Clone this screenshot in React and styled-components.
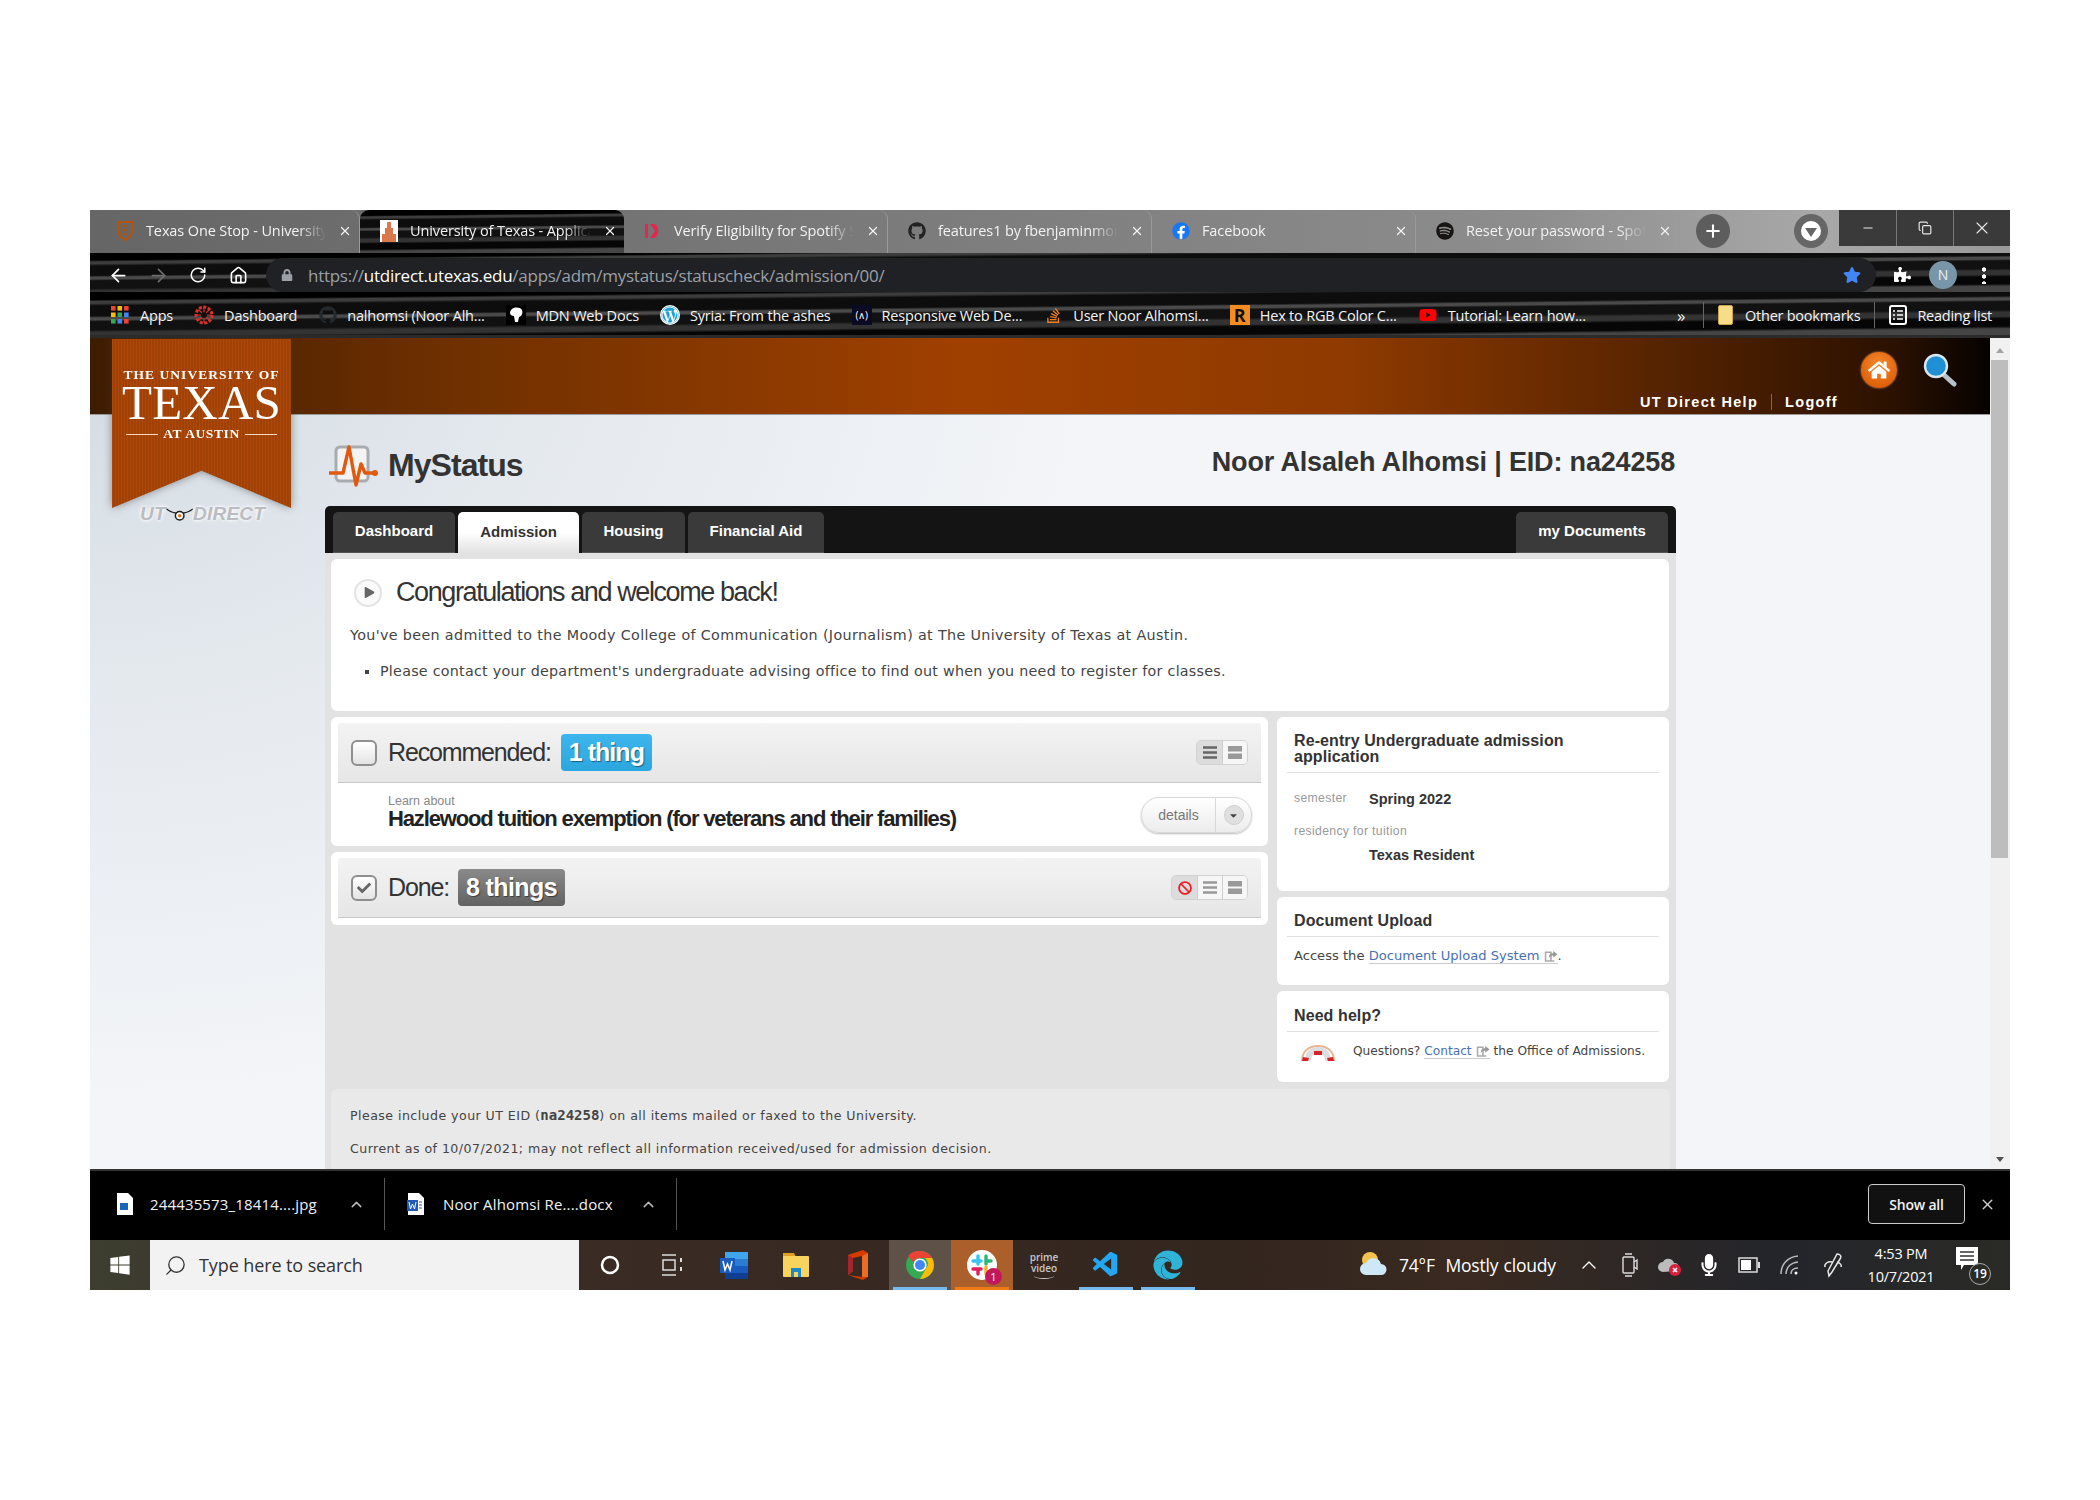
import styled, { createGlobalStyle, css } from "styled-components";
import { ArrowLeft, ArrowRight, RotateCw, Home, Plus, X, Minus, ChevronUp, Search, Copy } from "lucide-react";
import {
  FaGithub,
  FaFacebook,
  FaSpotify,
  FaWordpress,
  FaStackOverflow,
  FaYoutube,
  FaWindows,
  FaMicrophone,
  FaPuzzlePiece,
  FaStar,
  FaLock,
  FaBan,
  FaCheck,
  FaPlay,
  FaEdge,
  FaHome,
  FaCaretDown,
} from "react-icons/fa";
import { VscVscode } from "react-icons/vsc";

const GlobalStyle = createGlobalStyle`
  html, body {
    margin: 0;
    padding: 0;
    background: #fff;
  }
  * {
    box-sizing: border-box;
  }
`;

const winFont = `"Open Sans", "Noto Sans", sans-serif`;
const arial = `"Liberation Sans", Arial, sans-serif`;
const verdana = `"DejaVu Sans", Verdana, sans-serif`;

/* the chrome theme is a stretched photo, streaks are close enough */
const streaks = css`
  background:
    linear-gradient(179.4deg, #000 0 12%, #3d3d3d 15% 18%, #0d0d0d 22% 38%, #4a4a4a 41% 44%, #111 47% 60%, #333 64% 70%, #060606 74% 86%, #454545 90% 100%);
`;

const Screen = styled.div`
  width: 2100px;
  height: 1500px;
  padding: 210px 0 0 90px;
  overflow: hidden;
`;

const Window = styled.div`
  width: 1920px;
  height: 1080px;
  display: flex;
  flex-direction: column;
  font-family: ${winFont};
`;

/* ---------- tab strip ---------- */

const TabStrip = styled.div`
  height: 43px;
  display: flex;
  padding-left: 6px;
  background: linear-gradient(90deg, #666 0%, #7a7a7a 40%, #8d8d8d 75%, #a8a8a8 90%, #999 100%);
  position: relative;
`;

const Tab = styled.div`
  width: 264px;
  flex: none;
  display: flex;
  align-items: center;
  gap: 12px;
  padding: 0 7px 2px 20px;
  color: #f2f2f2;
  font-size: 14.5px;
  letter-spacing: -0.12px;
  border-radius: 9px 9px 0 0;
  ${(p) => p.$active && streaks}
  border-right: ${(p) => (p.$active ? "none" : "1px solid #9a9a9a")};
`;

const TabIcon = styled.span`
  width: 18px;
  height: 20px;
  flex: none;
  display: flex;
  align-items: center;
  justify-content: center;
  font-size: 18px;
  color: ${(p) => p.$color || "#222"};
  background: ${(p) => p.$bg || "transparent"};
`;

const TabTitle = styled.span`
  flex: 1;
  white-space: nowrap;
  overflow: hidden;
  mask-image: linear-gradient(90deg, #000 85%, transparent 100%);
`;

const NewTab = styled.div`
  width: 34px;
  height: 34px;
  margin: 4px 0 0 16px;
  border-radius: 50%;
  background: #5d5d5d;
  color: #fff;
  display: flex;
  align-items: center;
  justify-content: center;
`;

const ProfileDot = styled.div`
  width: 34px;
  height: 34px;
  margin: 4px 0 0 64px;
  border-radius: 50%;
  background: #666;
  display: flex;
  align-items: center;
  justify-content: center;
`;

const ProfileInner = styled.span`
  width: 20px;
  height: 20px;
  border-radius: 50%;
  background: #fff;
  display: flex;
  align-items: center;
  justify-content: center;
  padding-top: 2px;
  &::after {
    content: "";
    border-left: 6px solid transparent;
    border-right: 6px solid transparent;
    border-top: 9px solid #666;
  }
`;

const WindowButtons = styled.div`
  margin-left: auto;
  height: 36px;
  display: flex;
  background: #3a3a3a;
`;

const WindowButton = styled.div`
  width: 57px;
  display: flex;
  align-items: center;
  justify-content: center;
  color: #e8e8e8;
  border-left: 1px solid #777;
  &:first-child {
    border-left: none;
  }
`;

/* ---------- toolbar ---------- */

const Toolbar = styled.div`
  height: 39px;
  display: flex;
  align-items: flex-start;
  padding-left: 8px;
  ${streaks}
`;

const NavButton = styled.div`
  width: 40px;
  height: 34px;
  margin-top: 5px;
  display: flex;
  align-items: center;
  justify-content: center;
  color: ${(p) => (p.$dim ? "#6c6c6c" : "#fff")};
`;

const AddressBar = styled.div`
  width: 1610px;
  height: 34px;
  margin: 5px 0 0 8px;
  border-radius: 17px;
  background: #202124;
  display: flex;
  align-items: center;
  padding: 0 15px;
  font-size: 17px;
  letter-spacing: -0.27px;
  color: #9aa0a6;
`;

const LockIcon = styled.span`
  display: flex;
  font-size: 12px;
  margin-right: 15px;
`;

const Host = styled.span`
  color: #fff;
`;

const StarIcon = styled.span`
  margin-left: auto;
  display: flex;
  font-size: 18px;
  color: #4285f4;
`;

const ToolIcons = styled.div`
  display: flex;
  align-items: center;
  height: 43px;
  padding-left: 18px;
  gap: 18px;
  color: #fff;
`;

const Avatar = styled.div`
  width: 28px;
  height: 28px;
  border-radius: 50%;
  background: #7996a8;
  color: #e8eef2;
  font-size: 14px;
  display: flex;
  align-items: center;
  justify-content: center;
`;

const MenuDots = styled.div`
  width: 4px;
  height: 18px;
  margin-left: 7px;
  background: radial-gradient(circle, #fff 2px, transparent 2.2px) 0 0 / 4px 7px repeat-y;
`;

/* ---------- bookmarks ---------- */

const BookmarkBar = styled.div`
  height: 43px;
  display: flex;
  align-items: center;
  padding: 3px 0 0 20px;
  gap: 21px;
  color: #f4f4f4;
  font-size: 14.5px;
  letter-spacing: -0.19px;
  white-space: nowrap;
  ${streaks}
`;

const Bookmark = styled.div`
  display: flex;
  align-items: center;
  gap: ${(p) => p.$gap || 10}px;
`;

const MarkIcon = styled.span`
  width: 20px;
  height: 20px;
  flex: none;
  display: flex;
  align-items: center;
  justify-content: center;
  font-size: ${(p) => p.$size || 18}px;
  color: ${(p) => p.$color || "#fff"};
  background: ${(p) => p.$bg || "transparent"};
  border-radius: ${(p) => (p.$round ? "50%" : "0")};
`;

const RightMarks = styled.div`
  margin-left: auto;
  display: flex;
  align-items: center;
  padding-right: 18px;
  gap: 14px;
  letter-spacing: -0.25px;
`;

const Chevrons = styled.span`
  font-size: 17px;
  margin-right: 4px;
`;

const BarSep = styled.span`
  width: 1px;
  height: 26px;
  background: #666;
`;

const Folder = styled.span`
  width: 15px;
  height: 20px;
  background: #f7dd87;
  border: 1px solid #c9a94b;
  border-radius: 2px;
`;

/* ---------- page ---------- */

const Page = styled.div`
  height: 834px;
  padding-top: 3px;
  background: #2b2b2b;
  display: flex;
`;

const PageBody = styled.div`
  flex: 1;
  position: relative;
  overflow: hidden;
  background:
    radial-gradient(ellipse 1000px 760px at 0 0, #d2dae2 0%, #e4e9ee 45%, #f3f5f8 100%),
    #f3f5f8;
`;

const TopBand = styled.div`
  height: 77px;
  background: linear-gradient(90deg, #3d1c02 0%, #6d2f00 18%, #a04000 46%, #8f3a00 66%, #552300 83%, #2b1100 95%, #050200 100%);
  border-bottom: 1px solid #9a9a9a;
  display: flex;
  flex-direction: column;
  align-items: flex-end;
  padding-right: 33px;
`;

const TopIcons = styled.div`
  height: 46px;
  padding-top: 17px;
  display: flex;
  align-items: center;
  gap: 26px;
`;

const HomeBadge = styled.div`
  width: 36px;
  height: 36px;
  border-radius: 50%;
  background: radial-gradient(circle at 50% 35%, #f58a2c, #e0620c 70%, #c95205);
  color: #fff;
  font-size: 22px;
  display: flex;
  align-items: center;
  justify-content: center;
  box-shadow: 0 0 2px #e9a36c;
`;

const TopLinks = styled.div`
  display: flex;
  align-items: center;
  color: #fff;
  font: bold 14.5px ${arial};
  letter-spacing: 1.3px;
  margin-right: 119px;
  height: 20px;
  margin-top: 8px;
`;

const TopLink = styled.span`
  padding: 0 13px;
  & + & {
    border-left: 1px solid #b5581a;
  }
  &:last-child {
    padding-right: 0;
  }
`;

const Banner = styled.div`
  position: absolute;
  top: 1px;
  left: 22px;
  width: 179px;
  height: 169px;
  filter: drop-shadow(0 0 4px rgba(60, 60, 60, 0.55));
`;

const BannerShape = styled.div`
  height: 100%;
  padding-top: 28px;
  clip-path: polygon(0 0, 100% 0, 100% 100%, 50% 78%, 0 100%);
  background: repeating-linear-gradient(90deg, #ad480a 0 1px, #a04205 1px 3px);
  color: #fff;
  font-family: "Liberation Serif", serif;
  text-align: center;
`;

const BannerSmall = styled.div`
  font-size: 13.5px;
  font-weight: bold;
  letter-spacing: 1.05px;
  line-height: 16px;
  white-space: nowrap;
`;

const BannerBig = styled.div`
  font-size: 49px;
  line-height: 40px;
  letter-spacing: 0.2px;
`;

const BannerFoot = styled.div`
  margin-top: 3px;
  padding: 0 14px;
  display: flex;
  align-items: center;
  gap: 5px;
  font-size: 13.5px;
  line-height: 16px;
  font-weight: bold;
  letter-spacing: 0.6px;
  white-space: nowrap;
  &::before,
  &::after {
    content: "";
    flex: 1;
    height: 1px;
    background: #f5d9c0;
  }
`;

const UtDirect = styled.div`
  position: absolute;
  top: 161px;
  left: 50px;
  width: 125px;
  height: 30px;
  display: flex;
  align-items: center;
  justify-content: center;
  font: italic bold 19px ${arial};
  letter-spacing: 0.2px;
  color: #b9bcc0;
  text-shadow: 0 0 5px #fff, 0 0 3px #fff;
`;

const Content = styled.div`
  width: 1351px;
  margin-left: 235px;
`;

const TitleRow = styled.div`
  height: 91px;
  display: flex;
  align-items: center;
  justify-content: space-between;
  padding-top: 3px;
`;

const AppTitle = styled.div`
  display: flex;
  align-items: center;
  gap: 9px;
  font: bold 32px ${arial};
  letter-spacing: -0.95px;
  color: #333;
  margin-left: 2px;
  margin-top: 6px;
`;

const Who = styled.div`
  font: bold 27px ${arial};
  letter-spacing: -0.17px;
  color: #333;
  margin-top: 1px;
  margin-right: 1px;
`;

const TabBar = styled.div`
  height: 47px;
  padding: 6px 8px 0;
  background: #141414;
  border-radius: 5px 5px 0 0;
  display: flex;
  gap: 3px;
`;

const PageTab = styled.div`
  width: ${(p) => p.$w}px;
  display: flex;
  align-items: center;
  justify-content: center;
  border-radius: 5px 5px 0 0;
  font: bold 15px ${arial};
  padding-bottom: 3px;
  margin-left: ${(p) => (p.$right ? "auto" : "0")};
  color: ${(p) => (p.$active ? "#333" : "#fff")};
  background: ${(p) => (p.$active ? "linear-gradient(#fff 50%, #e2e2e2)" : "#3a3a3a")};
  border-bottom: ${(p) => (p.$active ? "none" : "1px solid #555")};
`;

const Panel = styled.div`
  background: #e2e2e2;
  padding: 6px 7px 0 6px;
  height: 618px;
`;

const Card = styled.div`
  background: #fff;
  border-radius: 6px;
`;

const WelcomeCard = styled(Card)`
  height: 152px;
  padding: 18px 20px 0 19px;
  color: #444;
  font: 14.3px ${verdana};
`;

const WelcomeHead = styled.div`
  display: flex;
  align-items: center;
  gap: 14px;
  margin-left: 4px;
  font: 27px ${arial};
  letter-spacing: -1.4px;
  color: #333;
`;

const PlayDot = styled.span`
  width: 28px;
  height: 28px;
  border-radius: 50%;
  border: 2px solid #e3e3e3;
  background: #fafafa;
  color: #666;
  font-size: 11px;
  display: flex;
  align-items: center;
  justify-content: center;
  padding-left: 2px;
`;

const WelcomeText = styled.p`
  margin: 19px 0 0;
  line-height: 17px;
  letter-spacing: 0.35px;
  white-space: nowrap;
`;

const WelcomeList = styled.ul`
  margin: 19px 0 0;
  padding: 0 0 0 30px;
  line-height: 17px;
  letter-spacing: 0.25px;
  list-style: square;
  white-space: nowrap;
`;

const Columns = styled.div`
  display: grid;
  grid-template-columns: 937px 392px;
  gap: 6px 9px;
  margin-top: 6px;
`;

const Stack = styled.div`
  display: flex;
  flex-direction: column;
  gap: 6px;
`;

const ThingsCard = styled(Card)`
  padding: 6px 7px 7px;
`;

const ThingsHead = styled.div`
  height: 60px;
  padding: 0 13px;
  display: flex;
  align-items: center;
  background: linear-gradient(#f3f3f3, #e6e6e6);
  border-bottom: 1px solid #c9c9c9;
  border-radius: 3px 3px 0 0;
  font: 25px ${arial};
  letter-spacing: -1.15px;
  color: #333;
`;

const CheckBox = styled.span`
  width: 26px;
  height: 26px;
  margin-right: 11px;
  border: 2px solid #8f8f8f;
  border-radius: 6px;
  background: linear-gradient(#fff, #e4e4e4);
  color: #666;
  font-size: 14px;
  display: flex;
  align-items: center;
  justify-content: center;
`;

const CountBadge = styled.span`
  margin-left: ${(p) => p.$gap}px;
  height: 37px;
  padding: 0 8px;
  display: flex;
  align-items: center;
  border-radius: 4px;
  font-weight: bold;
  letter-spacing: ${(p) => (p.$gray ? "-0.6px" : "-0.95px")};
  color: #fff;
  text-shadow: 1px 1px 1px rgba(0, 0, 0, 0.45);
  background: ${(p) => (p.$gray ? "linear-gradient(#8a8a8a, #626262)" : "linear-gradient(#3cb6ec, #2ca6de)")};
`;

const Toggles = styled.div`
  margin-left: auto;
  height: 25px;
  display: flex;
  border: 1px solid #d2d2d2;
  border-radius: 5px;
  overflow: hidden;
`;

const ToggleCell = styled.span`
  width: 25px;
  display: flex;
  align-items: center;
  justify-content: center;
  background: ${(p) => (p.$on ? "#dcdcdc" : "#f6f6f6")};
  border-left: 1px solid #cfcfcf;
  color: #ee1c25;
  font-size: 14px;
  &:first-child {
    border-left: none;
  }
`;

const ThingRow = styled.div`
  height: 56px;
  padding: 11px 9px 0 50px;
  display: flex;
  justify-content: space-between;
`;

const ThingSmall = styled.div`
  font: 12.5px/14px ${arial};
  color: #888;
`;

const ThingName = styled.div`
  font: bold 22px/22px ${arial};
  letter-spacing: -1.15px;
  color: #222;
`;

const DetailsPill = styled.div`
  width: 111px;
  height: 36px;
  margin-top: 3px;
  display: flex;
  border: 1px solid #d8d8d8;
  border-radius: 18px;
  background: linear-gradient(#fff, #ececec);
  box-shadow: 0 1px 2px #bbb;
  font: 14px ${arial};
  color: #777;
`;

const DetailsLabel = styled.span`
  width: 74px;
  border-right: 1px solid #d8d8d8;
  display: flex;
  align-items: center;
  justify-content: center;
`;

const DetailsArrow = styled.span`
  flex: 1;
  display: flex;
  align-items: center;
  justify-content: center;
`;

const ArrowDot = styled.span`
  width: 20px;
  height: 20px;
  border-radius: 50%;
  background: #e0e0e0;
  border: 1px solid #cfcfcf;
  color: #444;
  font-size: 11px;
  display: flex;
  align-items: center;
  justify-content: center;
`;

const SideCard = styled(Card)`
  height: ${(p) => p.$h}px;
  padding: ${(p) => p.$top}px 10px 0;
  color: #333;
`;

const SideHead = styled.div`
  padding: 0 6px 7px 7px;
  border-bottom: 1px solid #e0e0e0;
  font: bold 16px/16px ${arial};
  letter-spacing: 0.09px;
  color: #333;
`;

const FactLabel = styled.div`
  padding-left: 7px;
  margin-top: ${(p) => p.$top || 0}px;
  font: 12.2px ${arial};
  letter-spacing: 0.35px;
  color: #999;
`;

const FactRow = styled.div`
  display: flex;
  align-items: center;
  margin-top: 18px;
  ${FactLabel} {
    width: 82px;
    flex: none;
    margin-top: -3px;
  }
`;

const FactValue = styled.div`
  font: bold 14.5px ${arial};
  color: #333;
  margin-left: ${(p) => p.$indent || 0}px;
  margin-top: ${(p) => p.$top || 0}px;
`;

const SideText = styled.div`
  font: ${(p) => p.$size || 13.1}px ${verdana};
  color: #444;
  white-space: nowrap;
  padding-left: 7px;
  margin-top: 11px;
`;

const HelpRow = styled.div`
  display: flex;
  align-items: flex-start;
  gap: 17px;
  padding-left: 13px;
  margin-top: 12px;
  ${SideText} {
    margin-top: 0;
    padding-left: 0;
  }
`;

const OutLink = styled.span`
  color: #4a6fb5;
  border-bottom: 1px solid #ccc;
  display: inline-flex;
  align-items: center;
  gap: 4px;
`;

const FootNote = styled.div`
  margin: 7px -1px 0 0;
  height: 82px;
  padding: 18px 19px 0;
  background: #e9e9e9;
  border-radius: 6px 6px 0 0;
  font: 12.6px/17px ${verdana};
  letter-spacing: 0.44px;
  color: #444;
  p {
    margin: 0 0 16px;
  }
  b {
    font: bold 14px/17px "DejaVu Sans Mono", monospace;
    letter-spacing: 0;
  }
`;

const ScrollTrack = styled.div`
  width: 20px;
  flex: none;
  background: #f1f1f1;
  display: flex;
  flex-direction: column;
  align-items: center;
  justify-content: space-between;
  padding: 10px 0 7px;
  position: relative;
`;

const ScrollThumb = styled.div`
  position: absolute;
  top: 22px;
  left: 1px;
  width: 17px;
  height: 498px;
  background: #bdbdbd;
`;

const ScrollArrow = styled.span`
  width: 0;
  height: 0;
  border-left: 4px solid transparent;
  border-right: 4px solid transparent;
  ${(p) =>
    p.$down
      ? "border-top: 5px solid #505050;"
      : "border-bottom: 5px solid #a3a3a3;"}
`;

/* ---------- downloads ---------- */

const DownloadBar = styled.div`
  height: 71px;
  padding-bottom: 3px;
  background: #000;
  border-top: 2px solid #333;
  display: flex;
  align-items: center;
  color: #f2f2f2;
  font-size: 15px;
  letter-spacing: 0.15px;
`;

const DownloadItem = styled.div`
  width: ${(p) => p.$w}px;
  height: 52px;
  display: flex;
  align-items: center;
  padding-left: ${(p) => p.$pad}px;
  border-right: 1px solid #555;
`;

const FileName = styled.span`
  width: ${(p) => p.$w}px;
  margin-left: ${(p) => p.$gap}px;
  white-space: nowrap;
`;

const ShowAll = styled.div`
  margin-left: auto;
  width: 97px;
  height: 40px;
  border: 1px solid #ccc;
  border-radius: 4px;
  background: #111;
  font-weight: 600;
  font-size: 14px;
  letter-spacing: -0.2px;
  display: flex;
  align-items: center;
  justify-content: center;
`;

const CloseBar = styled.div`
  width: 45px;
  display: flex;
  justify-content: center;
  color: #ccc;
`;

/* ---------- taskbar ---------- */

const Taskbar = styled.div`
  height: 50px;
  display: flex;
  color: #fff;
  background: linear-gradient(90deg, #3d3d30 0%, #3a2c24 25%, #33261f 60%, #3a2a20 72%, #23252b 88%, #2a2a26 100%);
`;

const StartCell = styled.div`
  width: 60px;
  display: flex;
  align-items: center;
  justify-content: center;
  font-size: 22px;
`;

const SearchBox = styled.div`
  width: 429px;
  display: flex;
  align-items: center;
  gap: 12px;
  padding-left: 14px;
  background: #f2f2f2;
  color: #333;
  font-size: 18px;
  letter-spacing: -0.1px;
`;

const TaskCell = styled.div`
  width: 62px;
  display: flex;
  align-items: center;
  justify-content: center;
  font-size: 30px;
  background: ${(p) => p.$bg || "transparent"};
  position: relative;
  ${(p) =>
    p.$line &&
    css`
      &::after {
        content: "";
        position: absolute;
        left: 4px;
        right: 4px;
        bottom: 0;
        height: 3px;
        background: ${p.$line};
      }
    `}
`;

const PrimeText = styled.span`
  font-size: 10px;
  font-weight: 600;
  line-height: 11px;
  text-align: center;
  color: #c9c9c9;
  &::after {
    content: "";
    display: block;
    width: 20px;
    height: 5px;
    margin: -1px auto 0;
    border-bottom: 1.5px solid #c9c9c9;
    border-radius: 50%;
  }
`;

const SlackCount = styled.span`
  position: absolute;
  right: 11px;
  bottom: 5px;
  width: 17px;
  height: 17px;
  border-radius: 50%;
  background: #c2185b;
  font-size: 11px;
  line-height: 17px;
  text-align: center;
`;

const Tray = styled.div`
  margin-left: auto;
  display: grid;
  grid-template-columns: 40px 175px 40px 42px 38px 40px 40px 42px 46px 88px 52px 13px;
  align-items: center;
  justify-items: center;
`;

const Weather = styled.span`
  justify-self: start;
  padding-left: 5px;
  font-size: 17.5px;
  word-spacing: 1px;
  white-space: pre;
  letter-spacing: -0.2px;
`;

const Clock = styled.div`
  text-align: center;
  font-size: 14.5px;
  line-height: 23px;
  letter-spacing: -0.2px;
`;

const Notes = styled.div`
  position: relative;
  width: 30px;
  height: 36px;
`;

const NotesCount = styled.span`
  position: absolute;
  right: -5px;
  bottom: -2px;
  width: 22px;
  height: 22px;
  border-radius: 50%;
  border: 1px solid #aaa;
  background: #2a2a26;
  font-size: 12px;
  font-weight: 600;
  line-height: 20px;
  text-align: center;
`;

/* ---------- drawings ---------- */

const AppsGrid = () => (
  <svg width="18" height="18" viewBox="0 0 18 18">
    {[
      ["#ea4335", "#fbbc05", "#ea4335"],
      ["#fbbc05", "#34a853", "#4285f4"],
      ["#34a853", "#4285f4", "#ea4335"],
    ].map((row, y) =>
      row.map((c, x) => <rect key={`${x}${y}`} x={x * 6.5} y={y * 6.5} width="4.6" height="4.6" fill={c} />)
    )}
  </svg>
);

const UtSeal = () => (
  <svg width="16" height="20" viewBox="0 0 16 20">
    <path d="M1 1h14v10c0 4-4 6-7 8-3-2-7-4-7-8z" fill="none" stroke="#b45309" strokeWidth="2" />
    <path d="M5 5h6M5 9h6M5 13h6" stroke="#b45309" strokeWidth="1.6" />
  </svg>
);

const TowerFav = () => (
  <svg width="18" height="22" viewBox="0 0 18 22">
    <rect width="18" height="22" fill="#fff" />
    <path d="M7 2h4v6h2v6h3v8H2v-8h3V8h2z" fill="#d9784a" />
  </svg>
);

const IdFav = () => (
  <svg width="16" height="16" viewBox="0 0 16 16">
    <rect x="0" y="1" width="3" height="14" fill="#e5264d" />
    <path d="M5 1h3c7 0 7 14 0 14H5l5-7z" fill="#e5264d" />
  </svg>
);

const SpokeWheel = () => (
  <svg width="20" height="20" viewBox="0 0 20 20">
    <circle cx="10" cy="10" r="8" fill="none" stroke="#d7322b" strokeWidth="3" strokeDasharray="3 1.6" />
    <path d="M10 2v16M2 10h16M4.500 4.500l11 11M15.500 4.500l-11 11" stroke="#d7322b" strokeWidth="1.2" />
    <circle cx="10" cy="10" r="3" fill="#111" />
  </svg>
);

const MdnMark = () => (
  <svg width="14" height="16" viewBox="0 0 14 16">
    <path d="M3 2c3-2 8-2 10 1 1 3 0 6-3 7l-1 5H6L5 9C3 9 1 8 1 6c0-2 1-3 2-4z" fill="#fff" />
  </svg>
);

const FlameStack = () => <FaStackOverflow color="#f48024" size={17} />;

const ReadingList = () => (
  <svg width="18" height="20" viewBox="0 0 18 20">
    <rect x="1" y="1" width="16" height="18" rx="2" fill="none" stroke="#fff" strokeWidth="2" />
    <path d="M4 6h2M8 6h6M4 10h2M8 10h6M4 14h2M8 14h6" stroke="#fff" strokeWidth="1.6" />
  </svg>
);

const PulseLogo = () => (
  <svg width="52" height="46" viewBox="0 0 52 46">
    <rect x="9" y="5" width="32" height="34" rx="4" fill="#f4f4f4" stroke="#a8acb0" strokeWidth="3" />
    <path
      d="M2 31h14l6-26 7 38 5-21 4 9h9"
      fill="none"
      stroke="#e0590f"
      strokeWidth="3.4"
      strokeLinejoin="round"
    />
    <circle cx="48" cy="31" r="3" fill="#e0590f" />
  </svg>
);

const Longhorn = () => (
  <svg width="48" height="24" viewBox="0 0 48 24">
    <path d="M1 3c6 6 14 7 19 8M47 3c-6 6-14 7-19 8" fill="none" stroke="#1d1d1d" strokeWidth="2.4" />
    <circle cx="24" cy="15" r="7.500" fill="#fff" stroke="#1d1d1d" strokeWidth="2.6" />
    <circle cx="24" cy="15" r="3" fill="#d9781f" />
  </svg>
);

const Magnifier = () => (
  <svg width="34" height="34" viewBox="0 0 34 34">
    <path d="M20 21l11 10" stroke="#b7c0c6" strokeWidth="5" strokeLinecap="round" />
    <circle cx="13" cy="13" r="11" fill="#1f8fd6" stroke="#d9e7ef" strokeWidth="2.4" />
  </svg>
);

const ListGlyph = ({ dim }) => (
  <svg width="16" height="15" viewBox="0 0 16 15">
    <path d="M1 2.500h14M1 7.500h14M1 12.500h14" stroke={dim ? "#999" : "#666"} strokeWidth="2.4" />
  </svg>
);

const BlockGlyph = () => (
  <svg width="16" height="15" viewBox="0 0 16 15">
    <rect x="1" y="1" width="14" height="5.500" fill="#999" />
    <rect x="1" y="8.500" width="14" height="5.500" fill="#999" />
  </svg>
);

const LinkOutIcon = () => (
  <svg width="14" height="12" viewBox="0 0 12 11">
    <path d="M1 2h5v8H1zM9 10H1" fill="none" stroke="#aaa" strokeWidth="1.4" />
    <path d="M4 7c0-3 2-4 4-4V1l4 3-4 3V5C6 5 5 6 4 7z" fill="#999" />
  </svg>
);

const LifeBuoy = () => (
  <svg width="36" height="17" viewBox="0 0 36 17">
    <path d="M2 17C2 7 9 2 18 2s16 5 16 15" fill="none" stroke="#e8b596" strokeWidth="2" />
    <path d="M8 17C8 10 12 6 18 6s10 4 10 11" fill="none" stroke="#ddd" strokeWidth="6" />
    <path d="M14 7h8v4h-8zM3 13l6 1-1 3H2zM33 13l-6 1 1 3h6z" fill="#d8222a" />
  </svg>
);

const DocIcon = ({ word }) => (
  <svg width="18" height="22" viewBox="0 0 18 22">
    <path d="M1 0h11l5 5v17H1z" fill="#fff" />
    {word ? (
      <>
        <rect x="0" y="7" width="11" height="11" fill="#1e5bb8" />
        <path d="M2 9l1.500 7 2-5 2 5L9 9" fill="none" stroke="#fff" strokeWidth="1" />
        <path d="M12 9h3M12 12h3M12 15h3" stroke="#1e5bb8" strokeWidth="1.2" />
      </>
    ) : (
      <rect x="4" y="10" width="8" height="7" fill="#1a66b8" />
    )}
  </svg>
);

const WordTile = () => (
  <svg width="30" height="30" viewBox="0 0 30 30">
    <rect x="6" y="2" width="23" height="7" fill="#41a5ee" />
    <rect x="6" y="9" width="23" height="7" fill="#2b7cd3" />
    <rect x="6" y="16" width="23" height="7" fill="#185abd" />
    <rect x="6" y="23" width="23" height="6" fill="#103f91" />
    <rect x="1" y="8" width="15" height="15" fill="#1a5cbe" />
    <path d="M4 11l2 9 2.500-6 2.500 6 2-9" fill="none" stroke="#fff" strokeWidth="1.5" />
  </svg>
);

const ExplorerTile = () => (
  <svg width="30" height="30" viewBox="0 0 30 30">
    <path d="M2 3h11l2 4H2z" fill="#e0a020" />
    <rect x="2" y="6" width="26" height="21" rx="1" fill="#f9d45c" />
    <rect x="10" y="18" width="10" height="9" fill="#1e88c8" />
    <rect x="13" y="22" width="4" height="5" fill="#f9d45c" />
  </svg>
);

const OfficeTile = () => (
  <svg width="26" height="32" viewBox="0 0 26 32">
    <path d="M3 6l15-5 5 3v24l-5 3L3 26l14 2V7L8 9v13l-5 4z" fill="#d83b01" />
    <path d="M17 7v21l6 0V4z" fill="#eb6c24" />
    <path d="M8 9v13l-5 4V6z" fill="#a4262c" />
  </svg>
);

const ChromeTile = () => (
  <svg width="30" height="30" viewBox="0 0 30 30">
    <circle cx="15" cy="15" r="14" fill="#34a853" />
    <path d="M15 1a14 14 0 0 1 12.100 7H15a7 7 0 0 0-6.500 4.400L3 6a14 14 0 0 1 12-5z" fill="#ea4335" />
    <path d="M27.100 8A14 14 0 0 1 15 29l6-10.500A7 7 0 0 0 20 8z" fill="#fbbc05" />
    <circle cx="15" cy="15" r="6.600" fill="#fff" />
    <circle cx="15" cy="15" r="5" fill="#4285f4" />
  </svg>
);

const SlackTile = () => (
  <svg width="30" height="30" viewBox="0 0 30 30">
    <circle cx="15" cy="15" r="15" fill="#fff" />
    <path d="M11 6v8M6 11h8" stroke="#36c5f0" strokeWidth="3.4" strokeLinecap="round" />
    <path d="M19 6v8M19 11h5" stroke="#2eb67d" strokeWidth="3.4" strokeLinecap="round" />
    <path d="M6 19h8M11 19v5" stroke="#e01e5a" strokeWidth="3.4" strokeLinecap="round" />
    <path d="M19 17v7" stroke="#ecb22e" strokeWidth="3.4" strokeLinecap="round" />
  </svg>
);

const CloudSun = () => (
  <svg width="28" height="28" viewBox="0 0 28 28">
    <circle cx="10" cy="9" r="8" fill="#f2c14e" />
    <path d="M6 24a6 6 0 0 1 0-12 8 8 0 0 1 15 1 5.500 5.500 0 0 1 0 11z" fill="#cfe8f8" />
  </svg>
);

const TrayCamera = () => (
  <svg width="16" height="24" viewBox="0 0 16 24" fill="none" stroke="#ddd" strokeWidth="1.4">
    <rect x="1" y="4" width="11" height="16" rx="1" />
    <path d="M12 9l3-2v9l-3-2M3 1h7M3 23h7" />
  </svg>
);

const TrayCloud = () => (
  <svg width="24" height="24" viewBox="0 0 24 24">
    <path d="M5 19a5 5 0 0 1 0-10 6 6 0 0 1 11 1 4 4 0 0 1 1 8z" fill="#bbb" />
    <circle cx="17" cy="17" r="6" fill="#d81f3c" />
    <path d="M15 15l4 4M19 15l-4 4" stroke="#fff" strokeWidth="1.5" />
  </svg>
);

const TrayBattery = () => (
  <svg width="22" height="16" viewBox="0 0 22 16">
    <rect x="1" y="1" width="18" height="14" fill="none" stroke="#ddd" strokeWidth="1.5" />
    <rect x="3" y="3" width="10" height="10" fill="#fff" />
    <rect x="20" y="5" width="2" height="6" fill="#ddd" />
  </svg>
);

const TrayWifi = () => (
  <svg width="20" height="22" viewBox="0 0 20 22" fill="none" stroke="#bbb" strokeWidth="1.5">
    <path d="M1 20C1 11 7 3 18 2M6 20c0-6 4-11 12-12M11 20c0-3 2-6 7-6" />
    <circle cx="16" cy="19" r="1.500" fill="#fff" stroke="none" />
  </svg>
);

const TrayPen = () => (
  <svg width="22" height="26" viewBox="0 0 22 26" fill="none" stroke="#e8e8e8" strokeWidth="1.5">
    <path d="M14 2c3 0 5 2 3 5l-8 13-3 4-1-5z" />
    <path d="M9 10c-4-1-8 2-7 5M14 10c3 1 5 3 4 5" />
  </svg>
);

const TaskView = () => (
  <svg width="22" height="24" viewBox="0 0 22 24" fill="none" stroke="#ddd" strokeWidth="1.5">
    <path d="M1 2h14M1 22h14" />
    <rect x="2" y="7" width="12" height="10" />
    <path d="M20 5v4M20 14v4" strokeWidth="2" />
  </svg>
);

const NotesPage = () => (
  <svg width="22" height="24" viewBox="0 0 22 24">
    <path d="M0 0h22v18H8l-3 5v-5H0z" fill="#fff" />
    <path d="M4 5h14M4 9h14M4 13h14" stroke="#333" strokeWidth="1.4" />
  </svg>
);

const whiteDot = "radial-gradient(circle, #fff 55%, transparent 60%)";

const tabs = [
  { icon: <UtSeal />, title: "Texas One Stop - University" },
  { icon: <TowerFav />, title: "University of Texas - Applica", active: true },
  { icon: <IdFav />, title: "Verify Eligibility for Spotify S" },
  { icon: <FaGithub />, title: "features1 by fbenjaminmor" },
  { icon: <FaFacebook />, color: "#1877f2", bg: whiteDot, title: "Facebook" },
  { icon: <FaSpotify />, color: "#191414", title: "Reset your password - Spot" },
];

const marks = [
  { icon: <AppsGrid />, label: "Apps" },
  { icon: <SpokeWheel />, label: "Dashboard" },
  { icon: <FaGithub />, color: "#24292e", label: "nalhomsi (Noor Alh...", gap: 9 },
  { icon: <MdnMark />, bg: "#000", label: "MDN Web Docs" },
  { icon: <FaWordpress />, color: "#21a0d8", bg: "#fff", round: true, label: "Syria: From the ashes" },
  { icon: "(∧)", bg: "#0a0a23", size: 10, label: "Responsive Web De..." },
  { icon: <FlameStack />, label: "User Noor Alhomsi..." },
  { icon: <b>R</b>, color: "#111", bg: "#f48c22", label: "Hex to RGB Color C..." },
  { icon: <FaYoutube />, color: "#f00", label: "Tutorial: Learn how..." },
];

const App = () => {
  return (
    <Screen>
      <GlobalStyle />
      <Window>
        <TabStrip>
          {tabs.map((t) => (
            <Tab key={t.title} $active={t.active}>
              <TabIcon $color={t.color} $bg={t.bg}>
                {t.icon}
              </TabIcon>
              <TabTitle>{t.title}</TabTitle>
              <X size={14} strokeWidth={2.2} />
            </Tab>
          ))}
          <NewTab>
            <Plus size={20} strokeWidth={2.5} />
          </NewTab>
          <ProfileDot>
            <ProfileInner />
          </ProfileDot>
          <WindowButtons>
            <WindowButton>
              <Minus size={14} />
            </WindowButton>
            <WindowButton>
              <Copy size={14} />
            </WindowButton>
            <WindowButton>
              <X size={20} strokeWidth={1.3} />
            </WindowButton>
          </WindowButtons>
        </TabStrip>

        <Toolbar>
          <NavButton>
            <ArrowLeft size={21} />
          </NavButton>
          <NavButton $dim>
            <ArrowRight size={21} />
          </NavButton>
          <NavButton>
            <RotateCw size={18} />
          </NavButton>
          <NavButton>
            <Home size={19} />
          </NavButton>
          <AddressBar>
            <LockIcon>
              <FaLock />
            </LockIcon>
            https://<Host>utdirect.utexas.edu</Host>/apps/adm/mystatus/statuscheck/admission/00/
            <StarIcon>
              <FaStar />
            </StarIcon>
          </AddressBar>
          <ToolIcons>
            <FaPuzzlePiece size={17} />
            <Avatar>N</Avatar>
            <MenuDots />
          </ToolIcons>
        </Toolbar>

        <BookmarkBar>
          {marks.map((m) => (
            <Bookmark key={m.label} $gap={m.gap}>
              <MarkIcon $color={m.color} $bg={m.bg} $size={m.size} $round={m.round}>
                {m.icon}
              </MarkIcon>
              {m.label}
            </Bookmark>
          ))}
          <RightMarks>
            <Chevrons>»</Chevrons>
            <BarSep />
            <Bookmark $gap={12}>
              <Folder />
              Other bookmarks
            </Bookmark>
            <BarSep />
            <Bookmark>
              <ReadingList />
              Reading list
            </Bookmark>
          </RightMarks>
        </BookmarkBar>

        <Page>
          <PageBody>
            <TopBand>
              <TopIcons>
                <HomeBadge>
                  <FaHome />
                </HomeBadge>
                <Magnifier />
              </TopIcons>
              <TopLinks>
                <TopLink>UT Direct Help</TopLink>
                <TopLink>Logoff</TopLink>
              </TopLinks>
            </TopBand>

            <Banner>
              <BannerShape>
                <BannerSmall>THE UNIVERSITY OF</BannerSmall>
                <BannerBig>TEXAS</BannerBig>
                <BannerFoot>AT AUSTIN</BannerFoot>
              </BannerShape>
            </Banner>
            <UtDirect>
              UT
              <Longhorn />
              DIRECT
            </UtDirect>

            <Content>
              <TitleRow>
                <AppTitle>
                  <PulseLogo />
                  MyStatus
                </AppTitle>
                <Who>Noor Alsaleh Alhomsi | EID: na24258</Who>
              </TitleRow>

              <TabBar>
                <PageTab $w={122}>Dashboard</PageTab>
                <PageTab $w={121} $active>
                  Admission
                </PageTab>
                <PageTab $w={103}>Housing</PageTab>
                <PageTab $w={136}>Financial Aid</PageTab>
                <PageTab $w={152} $right>
                  my Documents
                </PageTab>
              </TabBar>

              <Panel>
                <WelcomeCard>
                  <WelcomeHead>
                    <PlayDot>
                      <FaPlay />
                    </PlayDot>
                    Congratulations and welcome back!
                  </WelcomeHead>
                  <WelcomeText>
                    You've been admitted to the Moody College of Communication (Journalism) at The University of Texas at Austin.
                  </WelcomeText>
                  <WelcomeList>
                    <li>Please contact your department's undergraduate advising office to find out when you need to register for classes.</li>
                  </WelcomeList>
                </WelcomeCard>

                <Columns>
                  <Stack>
                    <ThingsCard>
                      <ThingsHead>
                        <CheckBox />
                        Recommended:
                        <CountBadge $gap={10}>1 thing</CountBadge>
                        <Toggles>
                          <ToggleCell $on>
                            <ListGlyph />
                          </ToggleCell>
                          <ToggleCell>
                            <BlockGlyph />
                          </ToggleCell>
                        </Toggles>
                      </ThingsHead>
                      <ThingRow>
                        <div>
                          <ThingSmall>Learn about</ThingSmall>
                          <ThingName>Hazlewood tuition exemption (for veterans and their families)</ThingName>
                        </div>
                        <DetailsPill>
                          <DetailsLabel>details</DetailsLabel>
                          <DetailsArrow>
                            <ArrowDot>
                              <FaCaretDown />
                            </ArrowDot>
                          </DetailsArrow>
                        </DetailsPill>
                      </ThingRow>
                    </ThingsCard>

                    <ThingsCard>
                      <ThingsHead>
                        <CheckBox>
                          <FaCheck />
                        </CheckBox>
                        Done:
                        <CountBadge $gap={9} $gray>
                          8 things
                        </CountBadge>
                        <Toggles>
                          <ToggleCell $on>
                            <FaBan />
                          </ToggleCell>
                          <ToggleCell>
                            <ListGlyph dim />
                          </ToggleCell>
                          <ToggleCell>
                            <BlockGlyph />
                          </ToggleCell>
                        </Toggles>
                      </ThingsHead>
                    </ThingsCard>
                  </Stack>

                  <Stack>
                    <SideCard $h={174} $top={16}>
                      <SideHead>Re-entry Undergraduate admission application</SideHead>
                      <FactRow>
                        <FactLabel>semester</FactLabel>
                        <FactValue>Spring 2022</FactValue>
                      </FactRow>
                      <FactLabel $top={17}>residency for tuition</FactLabel>
                      <FactValue $indent={82} $top={9}>
                        Texas Resident
                      </FactValue>
                    </SideCard>
                    <SideCard $h={88} $top={16}>
                      <SideHead>Document Upload</SideHead>
                      <SideText>
                        Access the{" "}
                        <OutLink>
                          Document Upload System <LinkOutIcon />
                        </OutLink>
                        .
                      </SideText>
                    </SideCard>
                    <SideCard $h={91} $top={17}>
                      <SideHead>Need help?</SideHead>
                      <HelpRow>
                        <LifeBuoy />
                        <SideText $size={12.2}>
                          Questions?{" "}
                          <OutLink>
                            Contact <LinkOutIcon />
                          </OutLink>{" "}
                          the Office of Admissions.
                        </SideText>
                      </HelpRow>
                    </SideCard>
                  </Stack>
                </Columns>

                <FootNote>
                  <p>
                    Please include your UT EID (<b>na24258</b>) on all items mailed or faxed to the University.
                  </p>
                  <p>Current as of 10/07/2021; may not reflect all information received/used for admission decision.</p>
                </FootNote>
              </Panel>
            </Content>
          </PageBody>
          <ScrollTrack>
            <ScrollArrow />
            <ScrollThumb />
            <ScrollArrow $down />
          </ScrollTrack>
        </Page>

        <DownloadBar>
          <DownloadItem $w={295} $pad={26}>
            <DocIcon />
            <FileName $w={198} $gap={16}>
              244435573_18414....jpg
            </FileName>
            <ChevronUp size={17} color="#bbb" />
          </DownloadItem>
          <DownloadItem $w={292} $pad={22}>
            <DocIcon word />
            <FileName $w={197} $gap={18}>
              Noor Alhomsi Re....docx
            </FileName>
            <ChevronUp size={17} color="#bbb" />
          </DownloadItem>
          <ShowAll>Show all</ShowAll>
          <CloseBar>
            <X size={17} />
          </CloseBar>
        </DownloadBar>

        <Taskbar>
          <StartCell>
            <FaWindows />
          </StartCell>
          <SearchBox>
            <Search size={23} strokeWidth={1.4} style={{ transform: "scaleX(-1)" }} />
            Type here to search
          </SearchBox>
          <TaskCell>
            <svg width="20" height="20" viewBox="0 0 20 20">
              <circle cx="10" cy="10" r="8" fill="none" stroke="#fff" strokeWidth="2.5" />
            </svg>
          </TaskCell>
          <TaskCell>
            <TaskView />
          </TaskCell>
          <TaskCell>
            <WordTile />
          </TaskCell>
          <TaskCell>
            <ExplorerTile />
          </TaskCell>
          <TaskCell>
            <OfficeTile />
          </TaskCell>
          <TaskCell $bg="#5e5248" $line="#76b9ed">
            <ChromeTile />
          </TaskCell>
          <TaskCell $bg="#ab5f2a" $line="#f07a14">
            <SlackTile />
            <SlackCount>1</SlackCount>
          </TaskCell>
          <TaskCell>
            <PrimeText>
              prime
              <br />
              video
            </PrimeText>
          </TaskCell>
          <TaskCell $line="#76b9ed">
            <VscVscode color="#22a7f0" />
          </TaskCell>
          <TaskCell $line="#76b9ed">
            <FaEdge color="#2fb4d8" />
          </TaskCell>
          <Tray>
            <CloudSun />
            <Weather>74°F  Mostly cloudy</Weather>
            <ChevronUp size={24} strokeWidth={1.4} />
            <TrayCamera />
            <TrayCloud />
            <FaMicrophone size={22} />
            <TrayBattery />
            <TrayWifi />
            <TrayPen />
            <Clock>
              4:53 PM
              <br />
              10/7/2021
            </Clock>
            <Notes>
              <NotesPage />
              <NotesCount>19</NotesCount>
            </Notes>
          </Tray>
        </Taskbar>
      </Window>
    </Screen>
  );
};

export default App;
